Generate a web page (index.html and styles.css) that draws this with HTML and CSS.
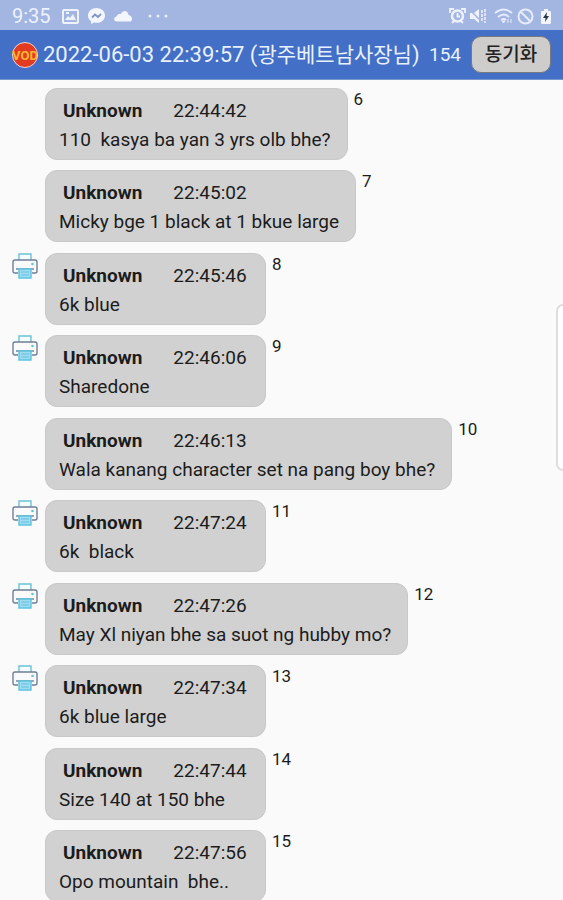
FILE: index.html
```html
<!DOCTYPE html>
<html lang="ko">
<head>
  <meta charset="utf-8"/>
  <meta name="viewport" content="width=device-width, initial-scale=1">
  <title>VOD</title>
  <link rel="stylesheet" href="styles.css">
</head>
<body>
  <!-- shared printer icon, used by the printed rows -->
  <svg class="symbols" width="0" height="0">
    <symbol id="printer" viewBox="0 0 26 28">
      <path d="M7 7V1h12v6" fill="#f4fcfd" stroke="#69c3d4" stroke-width="1.4"/>
      <path d="M6 20H3q-2 0-2-2V9q0-2 2-2h20q2 0 2 2v9q0 2-2 2h-3" fill="#fafafa" stroke="#6f7f96" stroke-width="1.4"/>
      <circle cx="20.500" cy="11" r="1.300" fill="#69c3d4"/>
      <path d="M4 16h18" stroke="#6f7f96" stroke-width="1.4"/>
      <path d="M7 16h12v9H7z" fill="#9edcf1" stroke="#5bc3dd" stroke-width="1.4"/>
      <path d="M9 19h8M9 22h8" stroke="#69bde0"/>
    </symbol>
  </svg>

  <div class="app">
    <div class="status-bar">
      <span class="clock">9:35</span>
      <div class="status-left">
        <svg width="17" height="15" viewBox="0 0 17 15"><path fill="#eef2fc" fill-rule="evenodd" d="M2 0h13q2 0 2 2v11q0 2-2 2H2q-2 0-2-2V2q0-2 2-2zM2 2v11h13V2zM3 11l3-4 2 2 3-4 3 6zM4 3h3v2H4z"/></svg>
        <svg width="17" height="16" viewBox="0 0 17 16"><path fill="#f3f6fd" d="M8.500 0C4 0 0 3 0 7.500c0 2.500 1 4.300 3 5.500v3l3-1.500c7 1.500 11-2.500 11-7C17 3 13 0 8.500 0z"/><path d="M4 9.500l3-3 3 2.500 3-3" fill="none" stroke="#8296c4" stroke-width="1.800"/></svg>
        <svg width="19" height="11" viewBox="0 0 19 11"><path fill="#f3f6fd" d="M3 10.500c-4 0-3.500-4.500-.5-5C3.500 3 6 2.500 7 3c2-4.500 7-3.500 7.500 1 4.500 1 4.500 6.500 1 6.500z"/></svg>
        <svg class="more" width="20" height="4" viewBox="0 0 20 4"><g fill="#e9effc"><circle cx="2" cy="2" r="1.500"/><circle cx="10" cy="2" r="1.500"/><circle cx="18" cy="2" r="1.500"/></g></svg>
      </div>
      <div class="status-right">
        <svg width="17" height="16" viewBox="0 0 17 16"><circle cx="8.500" cy="8" r="5.500" fill="none" stroke="#eef2fc" stroke-width="2.500"/><path d="M8.500 5v3.500H11M1 5V1h4M16 5V1h-4M3 15l2-2M14 15l-2-2" fill="none" stroke="#eef2fc" stroke-width="1.800"/></svg>
        <svg width="18" height="16" viewBox="0 0 18 16"><path d="M1 5h4l5-4v14l-5-4H1z" fill="#eef2fc"/><path d="M1 2l12 12" stroke="#a3b5e1" stroke-width="1.500"/><path d="M13 2v12M16 1v14" stroke="#eef2fc" stroke-width="1.500" stroke-dasharray="3 1"/></svg>
        <svg class="wifi" width="20" height="16" viewBox="0 0 20 16"><path d="M1 5q9-7 17 0M4 9q6-5 11 0M7 12q3-2 5 0" fill="none" stroke="#e6ecfa" stroke-width="1.800"/><path d="M8 13h3l-1.500 2zM14 11v4M17 15v-4" fill="#e6ecfa" stroke="#e6ecfa"/></svg>
        <svg width="17" height="17" viewBox="0 0 17 17"><circle cx="8.500" cy="8.500" r="7" fill="none" stroke="#e6ecfa" stroke-width="2"/><path d="M3.500 3.500l10 10" stroke="#e6ecfa" stroke-width="2"/></svg>
        <svg class="battery" width="10" height="15" viewBox="0 0 10 15"><path fill="#f1f5fb" d="M3 0h4v2h2q1 0 1 1v11q0 1-1 1H1q-1 0-1-1V3q0-1 1-1h2z"/><path fill="#2c3448" d="M6 3L2 9h2.500L4 13l4-6H5.500z"/></svg>
      </div>
    </div>

    <header class="toolbar">
      <svg class="logo" width="28" height="26" viewBox="0 0 28 26">
        <circle cx="14" cy="13" r="12.500" fill="#e33a22" stroke="#f0d5d5"/>
        <text class="logo-text" x="14" y="18" text-anchor="middle">VOD</text>
      </svg>
      <h1 class="title">2022-06-03 22:39:57 (<span class="room">광주베트남사장님</span>)</h1>
      <span class="count">154</span>
      <button class="sync" type="button">동기화</button>
    </header>

    <ul class="messages">
      <li class="message">
        <div class="mark"></div>
        <div class="bubble">
          <div class="meta"><b>Unknown</b><time>22:44:42</time></div>
          <p class="text">110  kasya ba yan 3 yrs olb bhe?</p>
        </div>
        <span class="number">6</span>
      </li>
      <li class="message">
        <div class="mark"></div>
        <div class="bubble">
          <div class="meta"><b>Unknown</b><time>22:45:02</time></div>
          <p class="text">Micky bge 1 black at 1 bkue large</p>
        </div>
        <span class="number">7</span>
      </li>
      <li class="message">
        <div class="mark"><svg width="26" height="28"><use href="#printer"/></svg></div>
        <div class="bubble">
          <div class="meta"><b>Unknown</b><time>22:45:46</time></div>
          <p class="text">6k blue</p>
        </div>
        <span class="number">8</span>
      </li>
      <li class="message">
        <div class="mark"><svg width="26" height="28"><use href="#printer"/></svg></div>
        <div class="bubble">
          <div class="meta"><b>Unknown</b><time>22:46:06</time></div>
          <p class="text">Sharedone</p>
        </div>
        <span class="number">9</span>
      </li>
      <li class="message">
        <div class="mark"></div>
        <div class="bubble">
          <div class="meta"><b>Unknown</b><time>22:46:13</time></div>
          <p class="text">Wala kanang character set na pang boy bhe?</p>
        </div>
        <span class="number">10</span>
      </li>
      <li class="message">
        <div class="mark"><svg width="26" height="28"><use href="#printer"/></svg></div>
        <div class="bubble">
          <div class="meta"><b>Unknown</b><time>22:47:24</time></div>
          <p class="text">6k  black</p>
        </div>
        <span class="number">11</span>
      </li>
      <li class="message">
        <div class="mark"><svg width="26" height="28"><use href="#printer"/></svg></div>
        <div class="bubble">
          <div class="meta"><b>Unknown</b><time>22:47:26</time></div>
          <p class="text">May Xl niyan bhe sa suot ng hubby mo?</p>
        </div>
        <span class="number">12</span>
      </li>
      <li class="message">
        <div class="mark"><svg width="26" height="28"><use href="#printer"/></svg></div>
        <div class="bubble">
          <div class="meta"><b>Unknown</b><time>22:47:34</time></div>
          <p class="text">6k blue large</p>
        </div>
        <span class="number">13</span>
      </li>
      <li class="message">
        <div class="mark"></div>
        <div class="bubble">
          <div class="meta"><b>Unknown</b><time>22:47:44</time></div>
          <p class="text">Size 140 at 150 bhe</p>
        </div>
        <span class="number">14</span>
      </li>
      <li class="message">
        <div class="mark"></div>
        <div class="bubble">
          <div class="meta"><b>Unknown</b><time>22:47:56</time></div>
          <p class="text">Opo mountain  bhe..</p>
        </div>
        <span class="number">15</span>
      </li>
    </ul>

    <!-- edge panel handle, floats over the list -->
    <div class="edge-handle"></div>
  </div>
</body>
</html>
```
FILE: styles.css
```css
* {
  box-sizing: border-box;
}

body {
  margin: 0;
  background: #fafafa;
  color: #1c1c1c;
  font-family: Roboto, "Noto Sans CJK KR", sans-serif;
}

svg {
  display: block;
  flex: none;
}

.symbols {
  position: absolute;
}

.app {
  position: relative;
  display: flex;
  flex-direction: column;
  height: 100vh;
  overflow: hidden;
}

.status-bar {
  flex: none;
  display: flex;
  align-items: center;
  height: 30px;
  padding: 2px 12px 0 12px;
  background: #a3b5e1;
  color: #edf2fd;
}

.clock {
  font-size: 20px;
  line-height: 24px;
}

.status-left {
  display: flex;
  align-items: center;
  gap: 9px;
  margin-left: 11px;
}

.more {
  margin-left: 6px;
}

.status-right {
  display: flex;
  align-items: center;
  gap: 3px;
  margin-left: auto;
}

.wifi,
.battery {
  margin-left: 4px;
}

.toolbar {
  flex: none;
  display: flex;
  align-items: center;
  height: 50px;
  padding: 0 12px 0 11px;
  background: #446fc6;
  border-bottom: 1px solid #7896cc;
  color: #e8f1ff;
}

.logo-text {
  font-size: 13px;
  font-weight: bold;
  fill: #ffb62e;
}

.title {
  margin: 0 0 0 4px;
  font-size: 22px;
  font-weight: 400;
  line-height: 28px;
  white-space: nowrap;
}

.room {
  font-size: 21px;
}

.count {
  margin-left: auto;
  font-size: 19px;
}

.sync {
  width: 80px;
  height: 37px;
  margin-left: 10px;
  padding: 0;
  border: 1px solid #77797f;
  border-radius: 10px;
  background: #cecdcc;
  color: #222;
  font-family: inherit;
  font-size: 19px;
  font-weight: 500;
  line-height: 24px;
}

.messages {
  flex: 1;
  min-height: 0;
  margin: 0;
  padding: 8px 0 0;
  overflow-y: auto;
  scrollbar-width: none;
  list-style: none;
}

.message {
  display: flex;
  align-items: flex-start;
  margin-bottom: 10px;
}

.message:nth-child(even) {
  margin-bottom: 11px;
}

.mark {
  flex: none;
  width: 45px;
  padding-left: 12px;
}

.bubble {
  min-width: 221px;
  height: 72px;
  padding: 7px 16px 7px 13px;
  border: 1px solid #c8c8c8;
  border-radius: 12px;
  background: #d1d1d1;
}

.meta {
  display: flex;
  gap: 31px;
  padding-left: 4px;
  font-size: 19px;
  line-height: 29px;
}

.text {
  margin: 0;
  font-size: 19px;
  line-height: 29px;
  white-space: pre-wrap;
}

.number {
  margin-left: 6px;
  font-size: 17px;
  line-height: 22px;
}

.edge-handle {
  position: absolute;
  top: 304px;
  right: 0;
  width: 7px;
  height: 167px;
  border: 2px solid #dedede;
  border-right: 0;
  border-radius: 7px 0 0 7px;
  background: #fff;
}
```
